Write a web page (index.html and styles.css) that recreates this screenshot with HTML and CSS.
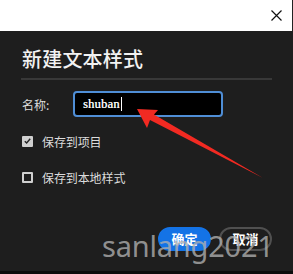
FILE: index.html
```html
<!DOCTYPE html>
<html>
<head>
<meta charset="utf-8">
<link rel="stylesheet" href="styles.css">
</head>
<body>
<div class="win">
  <div class="topbar">
    <svg class="close" width="11" height="11" viewBox="0 0 11 11"><path d="M0.5 0.5L10.5 10.5M10.5 0.5L0.5 10.5" stroke="#111" stroke-width="1.2" fill="none"/></svg>
  </div>
  <div class="dialog">
    <div class="title">新建文本样式</div>
    <div class="sep"></div>
    <div class="row name-row">
      <span class="label">名称:</span>
      <div class="input"><span class="val">shuban</span><span class="caret"></span></div>
    </div>
    <div class="row check-row first">
      <span class="box checked"><svg width="9" height="8" viewBox="0 0 9 8"><path d="M1 4.2L3.4 6.6L8 1.2" stroke="#222" stroke-width="1.8" fill="none"/></svg></span>
      <span class="ctext">保存到项目</span>
    </div>
    <div class="row check-row second">
      <span class="box"></span>
      <span class="ctext">保存到本地样式</span>
    </div>
    <div class="buttons">
      <button class="btn primary">确定</button>
      <button class="btn secondary">取消</button>
    </div>
  </div>
  <svg class="arrow" width="293" height="274" viewBox="0 0 293 274">
    <polygon points="137,109 158,110 154,114.5 263,178 150,120 147,128" fill="#f22a22"/>
  </svg>
  <div class="watermark">sanlang2021</div>
  <div class="bottom"></div>
</div>
</body>
</html>
```
FILE: styles.css
```css
html, body {
  margin: 0;
  padding: 0;
  background: #1e1e1e;
}
.win {
  position: relative;
  width: 293px;
  height: 274px;
  overflow: hidden;
  background: #1e1e1e;
  font-family: "Noto Sans CJK SC", "Noto Sans", sans-serif;
}
.topbar {
  height: 31px;
  background: #ffffff;
  display: flex;
  justify-content: flex-end;
  align-items: flex-start;
  border-right: 1px solid #222;
}
.close {
  margin-top: 10px;
  margin-right: 10px;
}
.dialog {
  padding: 18px 21px 0 21px;
}
.title {
  font-family: "Noto Sans CJK SC", sans-serif;
  font-size: 20px;
  line-height: 20px;
  color: #f2f2f2;
  font-weight: 500;
  letter-spacing: 0.2px;
  padding-left: 1px;
}
.sep {
  margin-top: 9px;
  height: 2px;
  background: #383838;
}
.row {
  display: flex;
  align-items: center;
}
.name-row {
  margin-top: 11px;
  height: 26px;
}
.label {
  width: 51px;
  font-size: 12px;
  color: #dcdcdc;
  padding-left: 1px;
}
.input {
  box-sizing: border-box;
  width: 150px;
  height: 26px;
  border: 2px solid #4f8ed6;
  border-radius: 4px;
  background: #000;
  display: flex;
  align-items: center;
  padding-left: 8px;
}
.val {
  font-family: "Liberation Serif", "DejaVu Serif", serif;
  font-size: 12.5px;
  color: #f4f4f4;
  text-shadow: 0.3px 0 0 #f4f4f4;
  letter-spacing: 0.2px;
}
.caret {
  width: 1px;
  height: 14px;
  background: #fff;
  margin-left: 1px;
}
.check-row {
  height: 14px;
}
.check-row.first {
  margin-top: 17px;
}
.check-row.second {
  margin-top: 22px;
}
.box {
  box-sizing: border-box;
  width: 11px;
  height: 11px;
  margin-left: 1px;
  border: 2px solid #d0d0d0;
  border-radius: 1px;
  display: flex;
  align-items: center;
  justify-content: center;
}
.box.checked {
  background: #d0d0d0;
}
.ctext {
  margin-left: 9px;
  font-size: 12px;
  color: #dcdcdc;
  letter-spacing: -0.1px;
}
.buttons {
  margin-top: 43px;
  display: flex;
  justify-content: flex-end;
  gap: 8px;
}
.btn {
  box-sizing: border-box;
  width: 53px;
  height: 24px;
  border-radius: 12px;
  font-family: "Noto Sans CJK SC", sans-serif;
  font-size: 13px;
  font-weight: bold;
  color: #fff;
  padding: 0;
  line-height: 20px;
}
.primary {
  background: #1473e6;
  border: 2px solid #1473e6;
}
.secondary {
  background: transparent;
  border: 2px solid #505050;
}
.arrow {
  position: absolute;
  left: 0;
  top: 0;
}
.watermark {
  position: absolute;
  left: 102px;
  top: 226px;
  font-family: "Noto Sans", sans-serif;
  font-size: 29px;
  line-height: 40px;
  color: rgba(175, 175, 175, 0.8);
  letter-spacing: -0.2px;
}
.bottom {
  position: absolute;
  left: 0;
  bottom: 0;
  width: 293px;
  height: 3px;
  background: #0c0c0c;
}
```
